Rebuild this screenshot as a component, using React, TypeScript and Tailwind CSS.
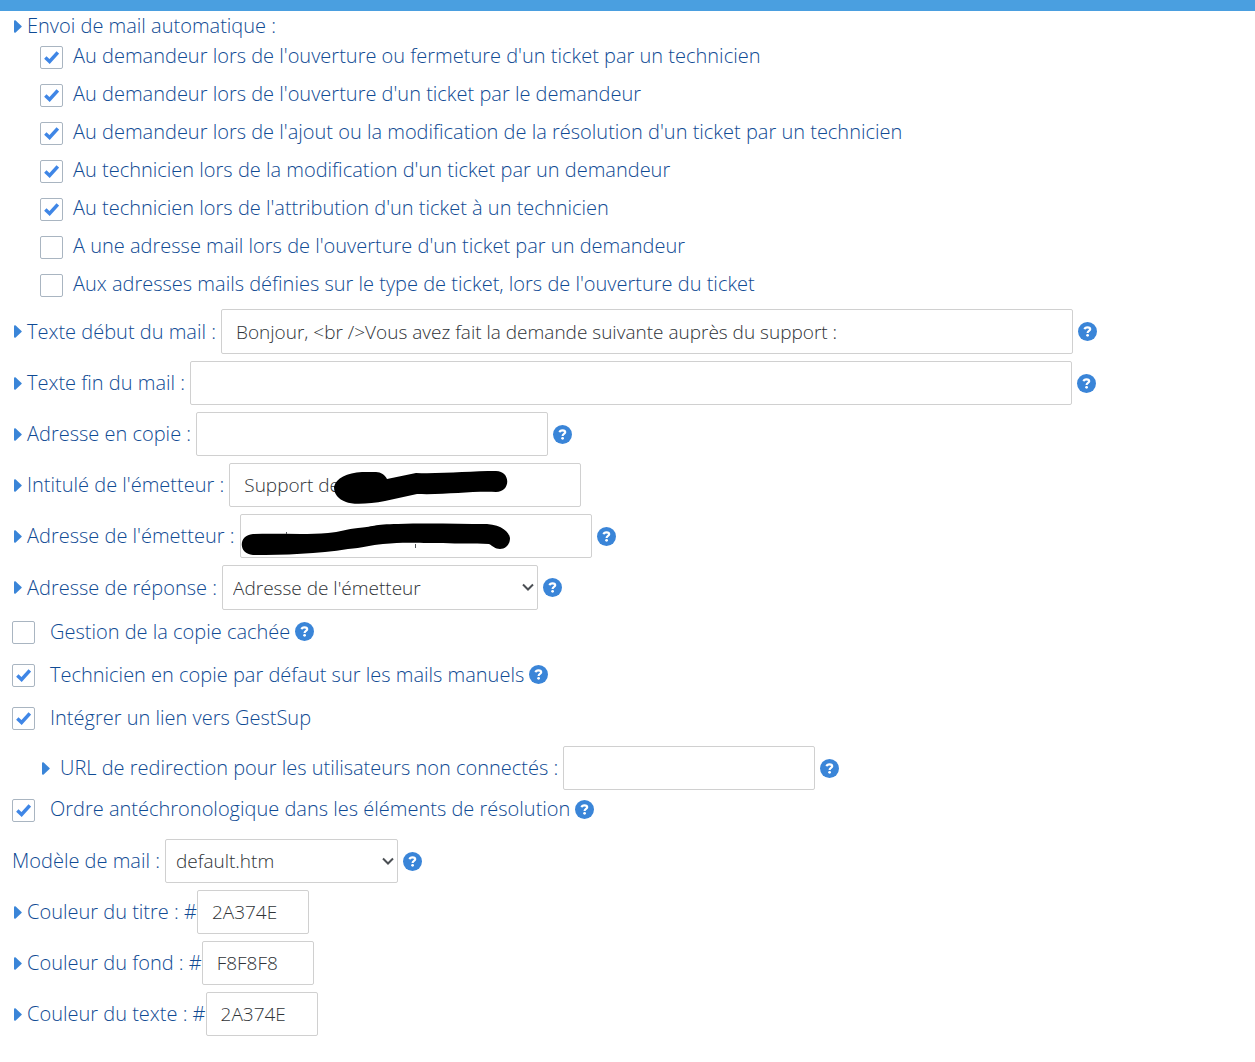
import { useState } from 'react';
import type { ReactNode } from 'react';

const mailOptions = [
  { id: 'mail_auto', label: "Au demandeur lors de l'ouverture ou fermeture d'un ticket par un technicien", checked: true },
  { id: 'mail_auto_user_newticket', label: "Au demandeur lors de l'ouverture d'un ticket par le demandeur", checked: true },
  { id: 'mail_auto_user_modify', label: "Au demandeur lors de l'ajout ou la modification de la résolution d'un ticket par un technicien", checked: true },
  { id: 'mail_auto_tech_modify', label: "Au technicien lors de la modification d'un ticket par un demandeur", checked: true },
  { id: 'mail_auto_tech_attribution', label: "Au technicien lors de l'attribution d'un ticket à un technicien", checked: true },
  { id: 'mail_newticket', label: "A une adresse mail lors de l'ouverture d'un ticket par un demandeur", checked: false },
  { id: 'mail_auto_type', label: "Aux adresses mails définies sur le type de ticket, lors de l'ouverture du ticket", checked: false },
];

const colors = [
  { id: 'mail_color_title', label: 'Couleur du titre : #', value: '2A374E' },
  { id: 'mail_color_bg', label: 'Couleur du fond : #', value: 'F8F8F8' },
  { id: 'mail_color_text', label: 'Couleur du texte : #', value: '2A374E' },
];

const fieldClass = 'max-w-full rounded-xs border border-[#d0d0d0] bg-white text-[19px] text-[#2f3337] outline-none focus:border-[#4a9fe0]';

function Caret() {
  return (
    <svg className="mr-[5px] h-[13px] w-2 shrink-0 fill-[#3a85d8]" viewBox="0 0 8 13" aria-hidden="true">
      <path d="M0 1.2C0 .2 1 0 1.700.6L7.500 5.900c.4.4.4.8 0 1.200L1.700 12.400C1 13 0 12.800 0 11.800z" />
    </svg>
  );
}

function Help() {
  return (
    <button type="button" aria-label="Aide" className="ml-[5px] shrink-0">
      <svg className="size-[19px]" viewBox="0 0 19 19" aria-hidden="true">
        <circle cx="9.500" cy="9.500" r="9.500" fill="#3a85d8" />
        <path d="M6.600 7.200C6.900 5.800 8 5.300 9.500 5.300c1.600 0 2.700.700 2.700 1.900 0 1.700-2.600 1.700-2.600 3.700" fill="none" stroke="#fff" strokeWidth="2.200" />
        <circle cx="9.600" cy="13.300" r="1.400" fill="#fff" />
      </svg>
    </button>
  );
}

function Check({ id, label, checked, wide }: { id: string; label: string; checked: boolean; wide?: boolean }) {
  const [on, setOn] = useState(checked);
  return (
    <>
      <span className="relative mt-[2px] flex shrink-0">
        <input
          id={id}
          type="checkbox"
          checked={on}
          onChange={() => setOn(!on)}
          className="size-[23px] appearance-none rounded-xs border border-[#a9b5c1] bg-white"
        />
        {on && (
          <svg className="pointer-events-none absolute left-1 top-1 size-[15px] fill-none stroke-[#3f86e6]" viewBox="0 0 15 15" aria-hidden="true">
            <path d="M1.300 7.500 5.600 11.500 13.800 2.500" strokeWidth="3.400" />
          </svg>
        )}
      </span>
      <label htmlFor={id} className={wide ? 'ml-[15px]' : 'ml-[10px]'}>{label}</label>
    </>
  );
}

function Select({ id, option, size }: { id: string; option: string; size: string }) {
  return (
    <div className="relative">
      <select id={id} className={`${fieldClass} ${size} appearance-none pl-[10px] pr-6`}>
        <option>{option}</option>
      </select>
      <svg className="pointer-events-none absolute right-1 top-[18px] h-2 w-3 fill-none stroke-[#4b4f54]" viewBox="0 0 12 8" aria-hidden="true">
        <path d="M1 1.500 6 6.500 11 1.500" strokeWidth="2" />
      </svg>
    </div>
  );
}

function Field({ id, label, help, children }: { id: string; label: string; help?: boolean; children: ReactNode }) {
  return (
    <div className="flex items-center pl-[14px]">
      <Caret />
      <label htmlFor={id} className="mr-[5px] shrink-0">{label}</label>
      {children}
      {help && <Help />}
    </div>
  );
}

export default function App() {
  return (
    <main className="min-h-screen bg-white pb-6 font-['Open_Sans',sans-serif] text-[20px] font-light leading-6 text-[#104b94]">
      <div className="h-[11px] bg-[#4a9fe0]" />
      <form>
        <fieldset>
          <legend className="flex items-center pl-[14px] pt-1 leading-[22px]">
            <Caret />
            Envoi de mail automatique :
          </legend>
          {mailOptions.map((o) => (
            <div key={o.id} className="flex h-[38px] items-center pl-10">
              <Check {...o} />
            </div>
          ))}
        </fieldset>

        <div className="flex flex-col gap-[7px] pt-[6px]">
          <Field id="mail_txt" label="Texte début du mail :" help>
            <input id="mail_txt" type="text" defaultValue="Bonjour, <br />Vous avez fait la demande suivante auprès du support :" className={`${fieldClass} h-[45px] w-[852px] px-[14px]`} />
          </Field>
          <Field id="mail_txt_end" label="Texte fin du mail :" help>
            <input id="mail_txt_end" type="text" className={`${fieldClass} h-11 w-[882px] px-[14px]`} />
          </Field>
          <Field id="mail_cc" label="Adresse en copie :" help>
            <input id="mail_cc" type="text" className={`${fieldClass} h-11 w-[352px] px-[14px]`} />
          </Field>
          <Field id="mail_from_name" label="Intitulé de l'émetteur :">
            <div className="relative">
              <input id="mail_from_name" type="text" defaultValue="Support de" className={`${fieldClass} h-11 w-[352px] px-[14px]`} />
              <svg className="pointer-events-none absolute left-0 top-0 h-11 w-[352px]" viewBox="0 0 352 44" aria-hidden="true">
                <path d="M105 24C107 15 118 10 133 9h14c5 0 9 3 11 7l29-6c25 1 55-2 80-2 15 0 15 21 0 21-25-1-50 3-79 2l-32 7c-15 3-33 4-39 1-8-3-12-8-12-15z" />
              </svg>
            </div>
          </Field>
          <Field id="mail_from_adr" label="Adresse de l'émetteur :" help>
            <div className="relative">
              <input id="mail_from_adr" type="text" className={`${fieldClass} h-11 w-[352px] px-[14px]`} />
              <svg className="pointer-events-none absolute left-0 top-0 h-11 w-[352px]" viewBox="0 0 352 44" aria-hidden="true">
                <path d="M13 20c26-1 50 1 75-1 12-1 19-4 30-5 14-1 16-4 40-4 30-1 60 0 89 0 15 1 22 8 23 14 0 8-6 11-10 11-5 0-7-3-11-5-16-1-30 0-46-1-30 0-40-1-60 1-12 1-21 4-35 5-30 5-65 6-95 6-15-1-15-20 0-21z" />
                <path d="M46 18h1v2h-1zM175 30h1v4h-1z" fill="#53575c" />
              </svg>
            </div>
          </Field>
          <Field id="mail_reply" label="Adresse de réponse :" help>
            <Select id="mail_reply" option="Adresse de l'émetteur" size="h-[45px] w-[316px]" />
          </Field>
        </div>

        <div className="pl-3">
          <div className="flex h-[43px] items-center">
            <Check id="mail_cci" label="Gestion de la copie cachée" checked={false} wide />
            <Help />
          </div>
          <div className="flex h-[43px] items-center">
            <Check id="mail_cc_tech" label="Technicien en copie par défaut sur les mails manuels" checked wide />
            <Help />
          </div>
          <div className="flex h-[43px] items-center">
            <Check id="mail_link" label="Intégrer un lien vers GestSup" checked wide />
          </div>
        </div>

        <div className="flex items-center pl-[42px] pt-[7px]">
          <Caret />
          <label htmlFor="mail_link_redirect" className="ml-[5px] mr-[5px] shrink-0">URL de redirection pour les utilisateurs non connectés :</label>
          <input id="mail_link_redirect" type="text" className={`${fieldClass} h-11 w-[252px] px-[14px]`} />
          <Help />
        </div>
        <div className="flex h-[38px] items-center pl-3">
          <Check id="mail_order" label="Ordre antéchronologique dans les éléments de résolution" checked wide />
          <Help />
        </div>

        <div className="flex flex-col gap-[7px] pt-[11px]">
          <div className="flex items-center pl-3">
            <label htmlFor="mail_template" className="mr-[5px] shrink-0">Modèle de mail :</label>
            <Select id="mail_template" option="default.htm" size="h-11 w-[233px]" />
            <Help />
          </div>
          {colors.map((c) => (
            <div key={c.id} className="flex items-center pl-[14px]">
              <Caret />
              <label htmlFor={c.id} className="shrink-0">{c.label}</label>
              <input id={c.id} type="text" defaultValue={c.value} className={`${fieldClass} h-11 w-[112px] px-[14px]`} />
            </div>
          ))}
        </div>
      </form>
    </main>
  );
}
